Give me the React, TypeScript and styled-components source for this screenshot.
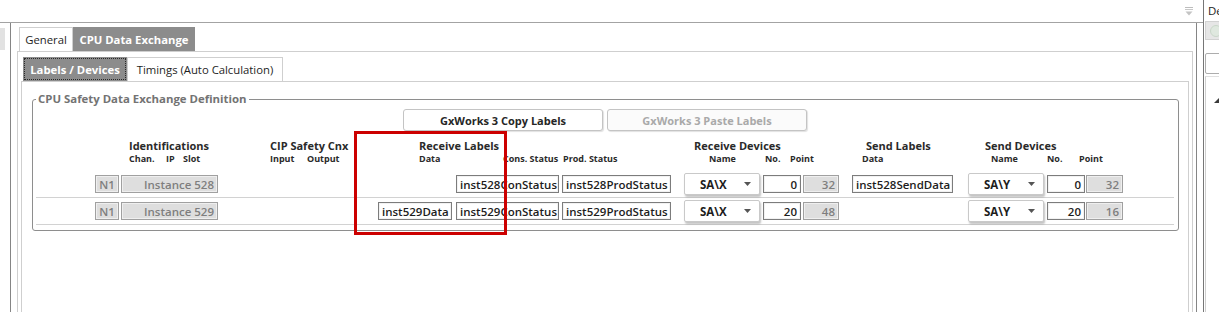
import React from 'react';
import styled, { createGlobalStyle } from 'styled-components';

const GlobalStyle = createGlobalStyle`
  html, body {
    margin: 0;
    padding: 0;
    background: #fff;
  }
  body {
    font-family: "Open Sans", "Noto Sans", "Liberation Sans", sans-serif;
    color: #222;
  }
  * {
    box-sizing: border-box;
  }
`;

const Screen = styled.div`
  position: relative;
  width: 1219px;
  height: 312px;
  overflow: hidden;
  display: flex;
  background: #fff;
`;

const Workspace = styled.div`
  width: 1203px;
  display: flex;
  flex-direction: column;
`;

const TopBar = styled.div`
  height: 22px;
  display: flex;
  justify-content: flex-end;
  padding: 7px 10px 0 0;
`;

const Body = styled.div`
  flex: 1;
  display: flex;
  border-top: 1px solid #a3a3a3;
`;

const Gutter = styled.div`
  width: 10px;
  padding-top: 5px;
`;

const GutterBlock = styled.div`
  width: 5px;
  height: 22px;
  background: #e2e2e2;
`;

const MainPanel = styled.div`
  width: 1187px;
  display: flex;
  flex-direction: column;
  border-left: 1px solid #858585;
  border-right: 1px solid #858585;
  padding: 4px 3px 0 6px;
`;

const TabStrip = styled.div`
  display: flex;
  height: 24px;
  padding-left: 2px;
`;

const Tab = styled.div<{ $active?: boolean; $w: number; $focus?: boolean }>`
  width: ${p => p.$w}px;
  height: 24px;
  display: flex;
  align-items: center;
  justify-content: center;
  font-size: 11.3px;
  white-space: nowrap;
  border: 1px solid ${p => (p.$active ? '#8c8c8c' : '#cfcfcf')};
  border-bottom: none;
  background: ${p => (p.$active ? '#8c8c8c' : '#fff')};
  color: ${p => (p.$active ? '#fff' : '#1e1e1e')};
  font-weight: ${p => (p.$active ? 700 : 400)};
  outline: ${p => (p.$focus ? '1px dotted #2a2a2a' : 'none')};
  outline-offset: -2px;
`;

const TabPanel = styled.div`
  flex: 1;
  display: flex;
  flex-direction: column;
  border: 1px solid #cfcfcf;
  border-bottom: none;
  padding: 5px 3px 0 3px;
`;

const InnerPanel = styled.div`
  flex: 1;
  border: 1px solid #cfcfcf;
  border-bottom: none;
  padding: 9px 9px 0 10px;
`;

const GroupBox = styled.fieldset`
  margin: 0;
  min-width: 0;
  padding: 2px 4px 5px 3px;
  border: 1px solid #8e8e8e;
  border-radius: 3px;
`;

const GroupLegend = styled.legend`
  padding: 0 2px;
  font-size: 11.4px;
  line-height: 16px;
  font-weight: 700;
  color: #737373;
`;

const ButtonRow = styled.div`
  display: flex;
  justify-content: center;
  gap: 4px;
`;

const ActionButton = styled.div<{ $disabled?: boolean }>`
  width: 200px;
  height: 22px;
  display: flex;
  align-items: center;
  justify-content: center;
  font-size: 11px;
  font-weight: 700;
  border: 1px solid #c4c4c4;
  border-radius: 3px;
  background: ${p => (p.$disabled ? '#fbfbfb' : '#fff')};
  color: ${p => (p.$disabled ? '#a9a9a9' : '#262626')};
  box-shadow: 1px 1px 1px rgba(0, 0, 0, 0.12);
`;

const HeaderLine = styled.div<{ $pad: number; $top?: number; $size: number; $lh: number }>`
  display: flex;
  padding-left: ${p => p.$pad}px;
  margin-top: ${p => p.$top ?? 0}px;
  font-size: ${p => p.$size}px;
  line-height: ${p => p.$lh}px;
  font-weight: 700;
  color: #2a2a2a;
  white-space: nowrap;
`;

const HeaderCell = styled.div<{ $w?: number }>`
  flex: ${p => (p.$w ? `0 0 ${p.$w}px` : '1')};
`;

const Rows = styled.div`
  margin-top: 6px;
`;

const Row = styled.div`
  display: flex;
  align-items: center;
  height: 27px;
  border-bottom: 1px solid #d2d2d2;
`;

const Box = styled.div<{ $w: number; $ml: number; $gray?: boolean; $align?: string }>`
  flex: 0 0 ${p => p.$w}px;
  height: 18px;
  margin-left: ${p => p.$ml}px;
  padding: 0 3px;
  display: flex;
  align-items: center;
  justify-content: ${p => p.$align ?? 'flex-start'};
  font-size: 11.5px;
  font-weight: 600;
  white-space: nowrap;
  overflow: hidden;
  border: 1px solid ${p => (p.$gray ? '#a0a0a0' : '#7c7c7c')};
  background: ${p => (p.$gray ? '#dedede' : '#fff')};
  color: ${p => (p.$gray ? '#7e7e7e' : '#1c1c1c')};
  box-shadow: inset 0 0 0 1px ${p => (p.$gray ? '#efefef' : '#f2f2f2')};
`;

const Blank = styled.div<{ $w: number; $ml: number }>`
  flex: 0 0 ${p => p.$w}px;
  margin-left: ${p => p.$ml}px;
`;

const Select = styled.div<{ $ml: number }>`
  flex: 0 0 76px;
  height: 22px;
  margin-left: ${p => p.$ml}px;
  padding: 0 8px 0 15px;
  display: flex;
  align-items: center;
  justify-content: space-between;
  font-size: 11.5px;
  font-weight: 700;
  color: #1c1c1c;
  background: #fff;
  border: 1px solid #c9c9c9;
  border-radius: 2px;
  box-shadow: 1px 2px 2px rgba(0, 0, 0, 0.24);
`;

const RightPane = styled.div`
  flex: 1;
  display: flex;
  flex-direction: column;
  border-left: 1px solid #767676;
  padding-left: 1px;
  overflow: hidden;
`;

const PaneTitle = styled.div`
  height: 21px;
  padding: 3px 0 0 3px;
  font-size: 11.5px;
  white-space: nowrap;
  overflow: hidden;
  color: #222;
`;

const PaneButton = styled.div`
  height: 19px;
  width: 30px;
  background: #e6e6e6;
  border: 1px solid #d2d2d2;
  display: flex;
  align-items: center;
  padding-left: 4px;
`;

const PaneSearch = styled.div`
  margin-top: 13px;
  height: 21px;
  width: 30px;
  border: 1px solid #adadad;
  border-radius: 2px;
`;

const PaneTree = styled.div`
  margin-top: 2px;
  flex: 1;
  border-left: 1px solid #cfcfcf;
  border-top: 1px solid #e0e0e0;
  padding: 9px 0 0 8px;
`;

const Annotation = styled.div`
  position: absolute;
  left: 354px;
  top: 131px;
  width: 153px;
  height: 104px;
  border: 3px solid #cc0000;
  pointer-events: none;
`;

const ORIGIN = 36;

const titles: [string, number][] = [
  ['Identifications', 129],
  ['CIP Safety Cnx', 270],
  ['Receive Labels', 419],
  ['Receive Devices', 694],
  ['Send Labels', 866],
  ['Send Devices', 985],
];

const subs: [string, number][] = [
  ['Chan.', 129],
  ['IP', 166],
  ['Slot', 183],
  ['Input', 270],
  ['Output', 307],
  ['Data', 419],
  ['Cons. Status', 503],
  ['Prod. Status', 563],
  ['Name', 709],
  ['No.', 765],
  ['Point', 790],
  ['Data', 862],
  ['Name', 991],
  ['No.', 1047],
  ['Point', 1079],
];

type Exchange = {
  instance: string;
  data?: string;
  cons: string;
  prod: string;
  recvName: string;
  recvNo: string;
  recvPoint: string;
  send?: string;
  sendName: string;
  sendNo: string;
  sendPoint: string;
};

const exchanges: Exchange[] = [
  {
    instance: 'Instance 528',
    cons: 'inst528ConStatus',
    prod: 'inst528ProdStatus',
    recvName: 'SA\\X',
    recvNo: '0',
    recvPoint: '32',
    send: 'inst528SendData',
    sendName: 'SA\\Y',
    sendNo: '0',
    sendPoint: '32',
  },
  {
    instance: 'Instance 529',
    data: 'inst529Data',
    cons: 'inst529ConStatus',
    prod: 'inst529ProdStatus',
    recvName: 'SA\\X',
    recvNo: '20',
    recvPoint: '48',
    sendName: 'SA\\Y',
    sendNo: '20',
    sendPoint: '16',
  },
];

const Caret = () => (
  <svg width="7" height="4" viewBox="0 0 7 4">
    <path d="M0 0 L7 0 L3.5 4 Z" fill="#555" />
  </svg>
);

const PinMenu = () => (
  <svg width="8" height="9" viewBox="0 0 8 9">
    <rect x="0" y="0" width="8" height="1" fill="#bdbdbd" />
    <rect x="0" y="2" width="8" height="1" fill="#c8c8c8" />
    <path d="M0.5 4.5 L7.5 4.5 L4 8.5 Z" fill="#c4c4c4" />
  </svg>
);

const Labels = ({ items, size, lh, top }: { items: [string, number][]; size: number; lh: number; top?: number }) => (
  <HeaderLine $pad={items[0][1] - ORIGIN} $size={size} $lh={lh} $top={top}>
    {items.map(([text, x], i) => (
      <HeaderCell key={i} $w={items[i + 1] ? items[i + 1][1] - x : undefined}>
        {text}
      </HeaderCell>
    ))}
  </HeaderLine>
);

const ExchangeRow = ({ ex }: { ex: Exchange }) => (
  <Row>
    <Box $w={24} $ml={59} $gray $align="center">N1</Box>
    <Box $w={97} $ml={2} $gray $align="flex-end">{ex.instance}</Box>
    {ex.data ? <Box $w={74} $ml={160}>{ex.data}</Box> : <Blank $w={74} $ml={160} />}
    <Box $w={103} $ml={4}>{ex.cons}</Box>
    <Box $w={109} $ml={3}>{ex.prod}</Box>
    <Select $ml={13}>
      {ex.recvName}
      <Caret />
    </Select>
    <Box $w={38} $ml={3} $align="flex-end">{ex.recvNo}</Box>
    <Box $w={36} $ml={2} $gray $align="flex-end">{ex.recvPoint}</Box>
    {ex.send ? <Box $w={101} $ml={13}>{ex.send}</Box> : <Blank $w={101} $ml={13} />}
    <Select $ml={15}>
      {ex.sendName}
      <Caret />
    </Select>
    <Box $w={38} $ml={3} $align="flex-end">{ex.sendNo}</Box>
    <Box $w={37} $ml={1} $gray $align="flex-end">{ex.sendPoint}</Box>
  </Row>
);

export default function App() {
  return (
    <>
      <GlobalStyle />
      <Screen>
        <Workspace>
          <TopBar>
            <PinMenu />
          </TopBar>
          <Body>
            <Gutter>
              <GutterBlock />
            </Gutter>
            <MainPanel>
              <TabStrip>
                <Tab $w={54}>General</Tab>
                <Tab $w={122} $active>CPU Data Exchange</Tab>
              </TabStrip>
              <TabPanel>
                <TabStrip>
                  <Tab $w={104} $active $focus>Labels / Devices</Tab>
                  <Tab $w={156}>Timings (Auto Calculation)</Tab>
                </TabStrip>
                <InnerPanel>
                  <GroupBox>
                    <GroupLegend>CPU Safety Data Exchange Definition</GroupLegend>
                    <ButtonRow>
                      <ActionButton>GxWorks 3 Copy Labels</ActionButton>
                      <ActionButton $disabled>GxWorks 3 Paste Labels</ActionButton>
                    </ButtonRow>
                    <Labels items={titles} size={11} lh={14} top={8} />
                    <Labels items={subs} size={9} lh={12} />
                    <Rows>
                      {exchanges.map((ex, i) => (
                        <ExchangeRow key={i} ex={ex} />
                      ))}
                    </Rows>
                  </GroupBox>
                </InnerPanel>
              </TabPanel>
            </MainPanel>
          </Body>
        </Workspace>
        <RightPane>
          <PaneTitle>De</PaneTitle>
          <PaneButton>
            <svg width="12" height="12" viewBox="0 0 12 12">
              <circle cx="6" cy="6" r="5.5" fill="#dfe8df" stroke="#c9d6c9" />
            </svg>
          </PaneButton>
          <PaneSearch />
          <PaneTree>
            <svg width="5" height="5" viewBox="0 0 5 5">
              <path d="M5 0 L5 5 L0 5 Z" fill="#3a3a3a" />
            </svg>
          </PaneTree>
        </RightPane>
        <Annotation />
      </Screen>
    </>
  );
}
